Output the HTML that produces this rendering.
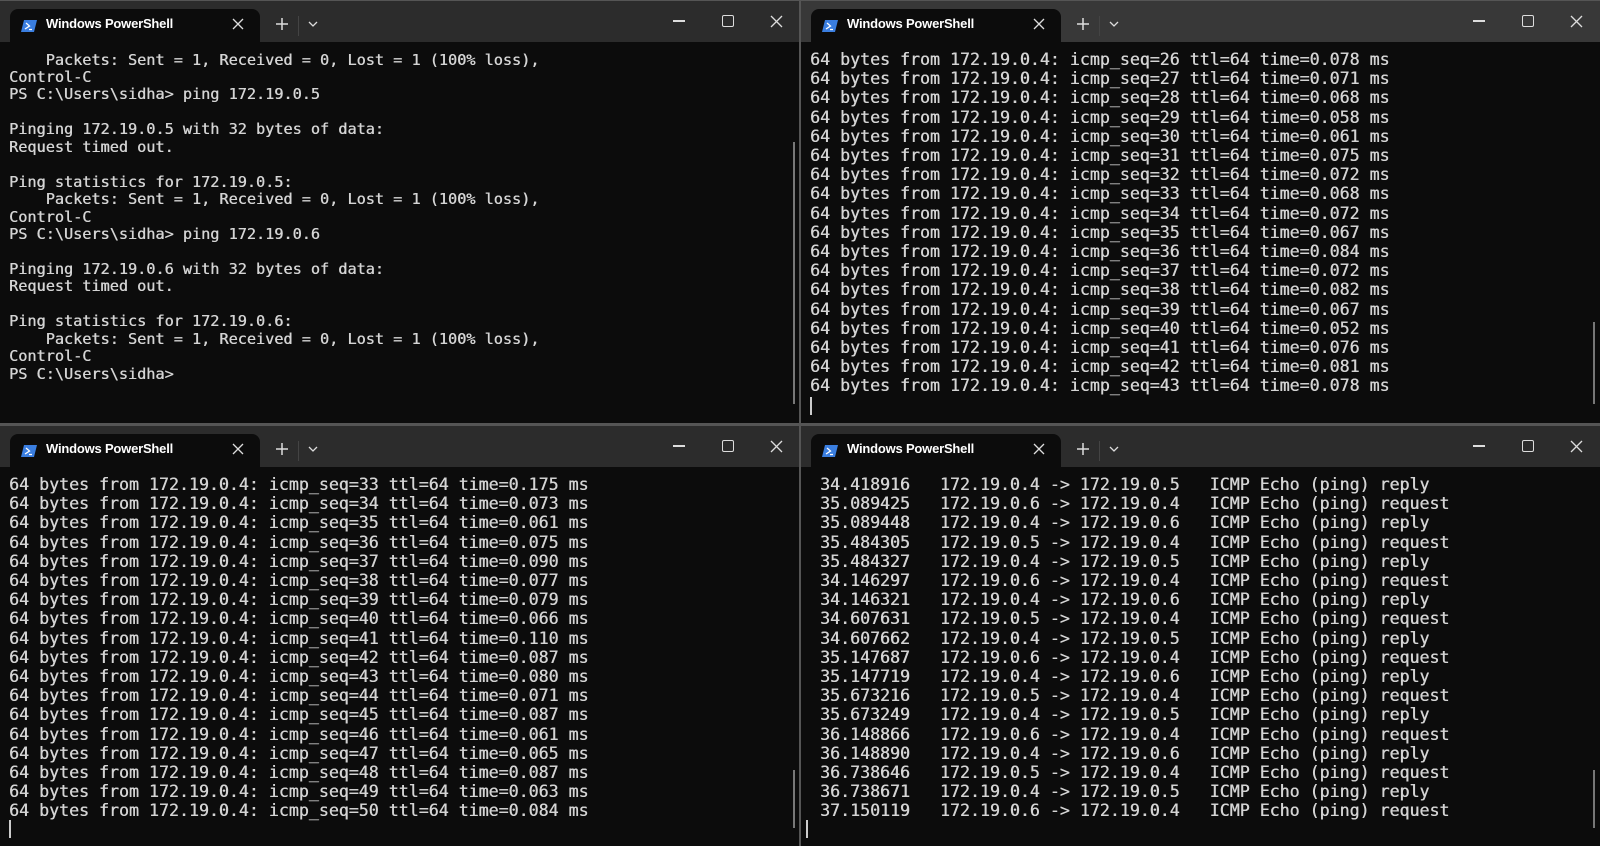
<!DOCTYPE html>
<html><head><meta charset="utf-8"><style>
html,body{margin:0;padding:0;background:#000;}
body{width:1600px;height:846px;position:relative;overflow:hidden;}
.pane{position:absolute;background:#0c0c0c;overflow:hidden;}
.bar{position:absolute;left:0;top:0;right:0;height:41px;background:#2c2c2c;border-top:1px solid #555;}
.pane.act .bar{background:#383838;}
.tab{position:absolute;left:10px;top:9px;width:250px;height:33px;background:#0c0c0c;border-radius:8px 8px 0 0;}
.ico{position:absolute;left:21px;top:20px;width:16px;height:12px;}
.ttl{position:absolute;left:46px;top:16px;font:bold 13px "Liberation Sans",sans-serif;color:#fff;letter-spacing:-0.2px;}
.tx{position:absolute;left:231px;top:17px;width:14px;height:14px;}
.plus{position:absolute;left:275px;top:17px;width:14px;height:14px;}
.sep{position:absolute;left:298px;top:16px;width:1px;height:20px;background:#444;}
.chev{position:absolute;left:308px;top:21px;width:10px;height:6px;}
.min{position:absolute;left:673px;top:20px;width:12px;height:2px;background:#ddd;}
.max{position:absolute;left:722px;top:15px;width:10px;height:10px;border:1.3px solid #ddd;border-radius:2px;}
.cls{position:absolute;left:770px;top:15px;width:13px;height:13px;}
pre{position:absolute;left:9px;top:50px;margin:0;font:16.6px/19.2px "DejaVu Sans Mono","Liberation Mono",monospace;color:#d4d4d4;text-shadow:0.4px 0 0 #d4d4d4;}
pre.sm{font-size:15.2px;line-height:17.45px;top:51.5px;}
.sb{position:absolute;width:2px;background:#777;}
.cur{position:absolute;width:2px;height:18px;background:#ccc;}
.vdiv{position:absolute;left:799px;top:0;width:2px;height:846px;background:#555;}
.hdiv{position:absolute;left:0;top:423px;width:1600px;height:2px;background:#555;}
</style></head><body>

<div class="pane" style="left:0;top:0;width:799px;height:423px;">
<div class="bar"></div><div class="tab"></div>
<svg class="ico" viewBox="0 0 16 12"><path d="M3 0H16L13 12H0Z" fill="#3a7ee0"/><path d="M5 3L8.5 6L4 9M8 9.5H11" stroke="#fff" stroke-width="1.3" fill="none"/></svg>
<div class="ttl">Windows PowerShell</div>
<svg class="tx" viewBox="0 0 14 14"><path d="M2 2L12 12M12 2L2 12" stroke="#ddd" stroke-width="1.3"/></svg>
<svg class="plus" viewBox="0 0 14 14"><path d="M7 1V13M1 7H13" stroke="#ddd" stroke-width="1.5"/></svg>
<div class="sep"></div>
<svg class="chev" viewBox="0 0 10 6"><path d="M1 1L5 5L9 1" stroke="#ddd" stroke-width="1.3" fill="none"/></svg>
<div class="min"></div><div class="max"></div>
<svg class="cls" viewBox="0 0 13 13"><path d="M1 1L12 12M12 1L1 12" stroke="#ddd" stroke-width="1.3"/></svg>
<pre class="sm">    Packets: Sent = 1, Received = 0, Lost = 1 (100% loss),
Control-C
PS C:\Users\sidha&gt; ping 172.19.0.5

Pinging 172.19.0.5 with 32 bytes of data:
Request timed out.

Ping statistics for 172.19.0.5:
    Packets: Sent = 1, Received = 0, Lost = 1 (100% loss),
Control-C
PS C:\Users\sidha&gt; ping 172.19.0.6

Pinging 172.19.0.6 with 32 bytes of data:
Request timed out.

Ping statistics for 172.19.0.6:
    Packets: Sent = 1, Received = 0, Lost = 1 (100% loss),
Control-C
PS C:\Users\sidha&gt;</pre>
<div class="sb" style="left:793px;top:142px;height:262px;"></div>
</div>

<div class="pane act" style="left:801px;top:0;width:799px;height:423px;">
<div class="bar"></div><div class="tab"></div>
<svg class="ico" viewBox="0 0 16 12"><path d="M3 0H16L13 12H0Z" fill="#3a7ee0"/><path d="M5 3L8.5 6L4 9M8 9.5H11" stroke="#fff" stroke-width="1.3" fill="none"/></svg>
<div class="ttl">Windows PowerShell</div>
<svg class="tx" viewBox="0 0 14 14"><path d="M2 2L12 12M12 2L2 12" stroke="#ddd" stroke-width="1.3"/></svg>
<svg class="plus" viewBox="0 0 14 14"><path d="M7 1V13M1 7H13" stroke="#ddd" stroke-width="1.5"/></svg>
<div class="sep"></div>
<svg class="chev" viewBox="0 0 10 6"><path d="M1 1L5 5L9 1" stroke="#ddd" stroke-width="1.3" fill="none"/></svg>
<div class="min" style="left:672px"></div><div class="max" style="left:721px"></div>
<svg class="cls" style="left:769px" viewBox="0 0 13 13"><path d="M1 1L12 12M12 1L1 12" stroke="#ddd" stroke-width="1.3"/></svg>
<pre>64 bytes from 172.19.0.4: icmp_seq=26 ttl=64 time=0.078 ms
64 bytes from 172.19.0.4: icmp_seq=27 ttl=64 time=0.071 ms
64 bytes from 172.19.0.4: icmp_seq=28 ttl=64 time=0.068 ms
64 bytes from 172.19.0.4: icmp_seq=29 ttl=64 time=0.058 ms
64 bytes from 172.19.0.4: icmp_seq=30 ttl=64 time=0.061 ms
64 bytes from 172.19.0.4: icmp_seq=31 ttl=64 time=0.075 ms
64 bytes from 172.19.0.4: icmp_seq=32 ttl=64 time=0.072 ms
64 bytes from 172.19.0.4: icmp_seq=33 ttl=64 time=0.068 ms
64 bytes from 172.19.0.4: icmp_seq=34 ttl=64 time=0.072 ms
64 bytes from 172.19.0.4: icmp_seq=35 ttl=64 time=0.067 ms
64 bytes from 172.19.0.4: icmp_seq=36 ttl=64 time=0.084 ms
64 bytes from 172.19.0.4: icmp_seq=37 ttl=64 time=0.072 ms
64 bytes from 172.19.0.4: icmp_seq=38 ttl=64 time=0.082 ms
64 bytes from 172.19.0.4: icmp_seq=39 ttl=64 time=0.067 ms
64 bytes from 172.19.0.4: icmp_seq=40 ttl=64 time=0.052 ms
64 bytes from 172.19.0.4: icmp_seq=41 ttl=64 time=0.076 ms
64 bytes from 172.19.0.4: icmp_seq=42 ttl=64 time=0.081 ms
64 bytes from 172.19.0.4: icmp_seq=43 ttl=64 time=0.078 ms</pre>
<div class="cur" style="left:9px;top:397px;"></div>
<div class="sb" style="left:792px;top:322px;height:82px;"></div>
</div>

<div class="pane" style="left:0;top:425px;width:799px;height:421px;">
<div class="bar"></div><div class="tab"></div>
<svg class="ico" viewBox="0 0 16 12"><path d="M3 0H16L13 12H0Z" fill="#3a7ee0"/><path d="M5 3L8.5 6L4 9M8 9.5H11" stroke="#fff" stroke-width="1.3" fill="none"/></svg>
<div class="ttl">Windows PowerShell</div>
<svg class="tx" viewBox="0 0 14 14"><path d="M2 2L12 12M12 2L2 12" stroke="#ddd" stroke-width="1.3"/></svg>
<svg class="plus" viewBox="0 0 14 14"><path d="M7 1V13M1 7H13" stroke="#ddd" stroke-width="1.5"/></svg>
<div class="sep"></div>
<svg class="chev" viewBox="0 0 10 6"><path d="M1 1L5 5L9 1" stroke="#ddd" stroke-width="1.3" fill="none"/></svg>
<div class="min"></div><div class="max"></div>
<svg class="cls" viewBox="0 0 13 13"><path d="M1 1L12 12M12 1L1 12" stroke="#ddd" stroke-width="1.3"/></svg>
<pre>64 bytes from 172.19.0.4: icmp_seq=33 ttl=64 time=0.175 ms
64 bytes from 172.19.0.4: icmp_seq=34 ttl=64 time=0.073 ms
64 bytes from 172.19.0.4: icmp_seq=35 ttl=64 time=0.061 ms
64 bytes from 172.19.0.4: icmp_seq=36 ttl=64 time=0.075 ms
64 bytes from 172.19.0.4: icmp_seq=37 ttl=64 time=0.090 ms
64 bytes from 172.19.0.4: icmp_seq=38 ttl=64 time=0.077 ms
64 bytes from 172.19.0.4: icmp_seq=39 ttl=64 time=0.079 ms
64 bytes from 172.19.0.4: icmp_seq=40 ttl=64 time=0.066 ms
64 bytes from 172.19.0.4: icmp_seq=41 ttl=64 time=0.110 ms
64 bytes from 172.19.0.4: icmp_seq=42 ttl=64 time=0.087 ms
64 bytes from 172.19.0.4: icmp_seq=43 ttl=64 time=0.080 ms
64 bytes from 172.19.0.4: icmp_seq=44 ttl=64 time=0.071 ms
64 bytes from 172.19.0.4: icmp_seq=45 ttl=64 time=0.087 ms
64 bytes from 172.19.0.4: icmp_seq=46 ttl=64 time=0.061 ms
64 bytes from 172.19.0.4: icmp_seq=47 ttl=64 time=0.065 ms
64 bytes from 172.19.0.4: icmp_seq=48 ttl=64 time=0.087 ms
64 bytes from 172.19.0.4: icmp_seq=49 ttl=64 time=0.063 ms
64 bytes from 172.19.0.4: icmp_seq=50 ttl=64 time=0.084 ms</pre>
<div class="cur" style="left:9px;top:395px;"></div>
<div class="sb" style="left:793px;top:345px;height:58px;"></div>
</div>

<div class="pane" style="left:801px;top:425px;width:799px;height:421px;">
<div class="bar"></div><div class="tab"></div>
<svg class="ico" viewBox="0 0 16 12"><path d="M3 0H16L13 12H0Z" fill="#3a7ee0"/><path d="M5 3L8.5 6L4 9M8 9.5H11" stroke="#fff" stroke-width="1.3" fill="none"/></svg>
<div class="ttl">Windows PowerShell</div>
<svg class="tx" viewBox="0 0 14 14"><path d="M2 2L12 12M12 2L2 12" stroke="#ddd" stroke-width="1.3"/></svg>
<svg class="plus" viewBox="0 0 14 14"><path d="M7 1V13M1 7H13" stroke="#ddd" stroke-width="1.5"/></svg>
<div class="sep"></div>
<svg class="chev" viewBox="0 0 10 6"><path d="M1 1L5 5L9 1" stroke="#ddd" stroke-width="1.3" fill="none"/></svg>
<div class="min" style="left:672px"></div><div class="max" style="left:721px"></div>
<svg class="cls" style="left:769px" viewBox="0 0 13 13"><path d="M1 1L12 12M12 1L1 12" stroke="#ddd" stroke-width="1.3"/></svg>
<pre> 34.418916   172.19.0.4 -&gt; 172.19.0.5   ICMP Echo (ping) reply
 35.089425   172.19.0.6 -&gt; 172.19.0.4   ICMP Echo (ping) request
 35.089448   172.19.0.4 -&gt; 172.19.0.6   ICMP Echo (ping) reply
 35.484305   172.19.0.5 -&gt; 172.19.0.4   ICMP Echo (ping) request
 35.484327   172.19.0.4 -&gt; 172.19.0.5   ICMP Echo (ping) reply
 34.146297   172.19.0.6 -&gt; 172.19.0.4   ICMP Echo (ping) request
 34.146321   172.19.0.4 -&gt; 172.19.0.6   ICMP Echo (ping) reply
 34.607631   172.19.0.5 -&gt; 172.19.0.4   ICMP Echo (ping) request
 34.607662   172.19.0.4 -&gt; 172.19.0.5   ICMP Echo (ping) reply
 35.147687   172.19.0.6 -&gt; 172.19.0.4   ICMP Echo (ping) request
 35.147719   172.19.0.4 -&gt; 172.19.0.6   ICMP Echo (ping) reply
 35.673216   172.19.0.5 -&gt; 172.19.0.4   ICMP Echo (ping) request
 35.673249   172.19.0.4 -&gt; 172.19.0.5   ICMP Echo (ping) reply
 36.148866   172.19.0.6 -&gt; 172.19.0.4   ICMP Echo (ping) request
 36.148890   172.19.0.4 -&gt; 172.19.0.6   ICMP Echo (ping) reply
 36.738646   172.19.0.5 -&gt; 172.19.0.4   ICMP Echo (ping) request
 36.738671   172.19.0.4 -&gt; 172.19.0.5   ICMP Echo (ping) reply
 37.150119   172.19.0.6 -&gt; 172.19.0.4   ICMP Echo (ping) request</pre>
<div class="cur" style="left:5px;top:395px;"></div>
<div class="sb" style="left:792px;top:345px;height:58px;"></div>
</div>

<div class="vdiv"></div><div class="hdiv"></div>
</body></html>
